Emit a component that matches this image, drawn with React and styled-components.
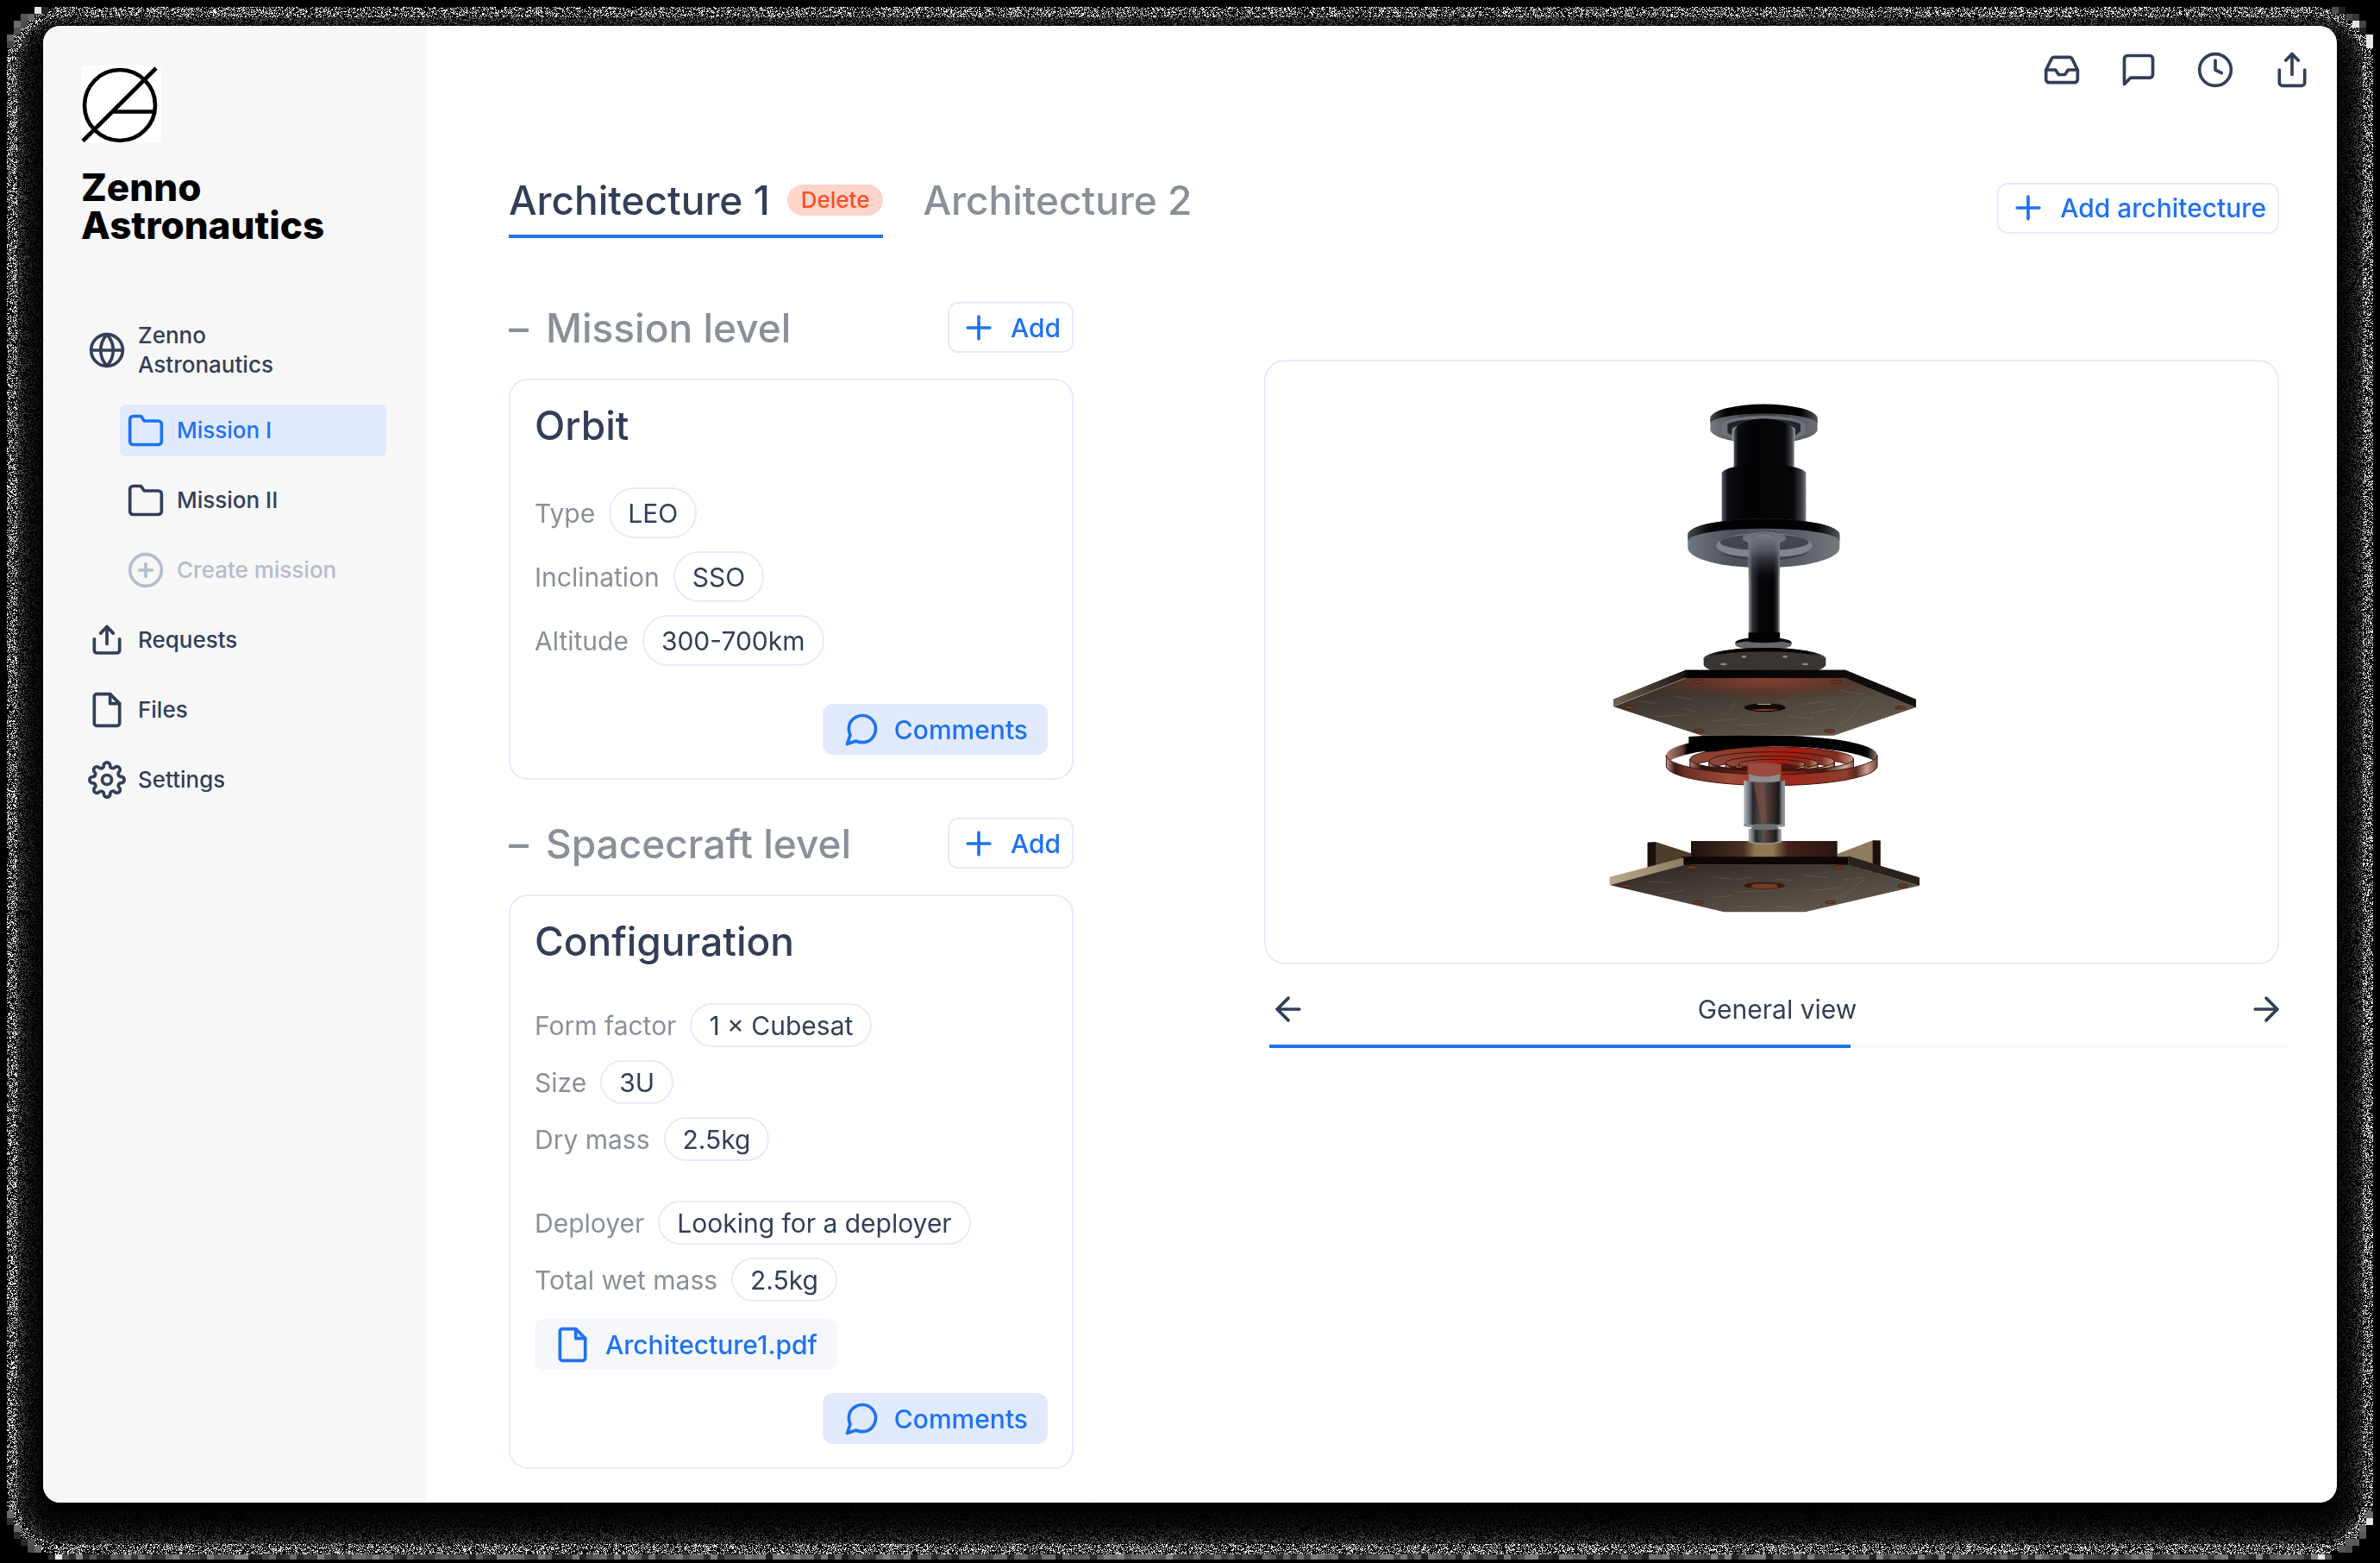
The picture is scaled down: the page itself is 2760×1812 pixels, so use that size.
import React, { useEffect, useRef } from "react";
import styled, { createGlobalStyle, css } from "styled-components";
import {
  FiArrowLeft,
  FiArrowRight,
  FiClock,
  FiFolder,
  FiGlobe,
  FiInbox,
  FiMessageCircle,
  FiMessageSquare,
  FiPlus,
  FiPlusCircle,
  FiSettings,
  FiShare,
} from "react-icons/fi";

const color = {
  ink: "#333e57",
  muted: "#8a8f99",
  faint: "#b5bccb",
  blue: "#1f72f2",
  blueSoft: "#e0eafc",
  line: "#e6eafb",
  sidebar: "#f7f7f7",
};

const GlobalStyle = createGlobalStyle`
  *, *::before, *::after { box-sizing: border-box; }
  body { margin: 0; background: #000; }
  body, button { font-family: Inter, "Noto Sans", sans-serif; color: ${color.ink}; }
  button { margin: 0; padding: 0; border: 0; background: none; cursor: pointer; }
  a { color: inherit; text-decoration: none; }
  h1, h2, h3, p, dl, dd, ul { margin: 0; padding: 0; }
  ul { list-style: none; }
  svg { display: block; flex: none; }
`;

/* ---------- frame ---------- */

const Stage = styled.div`
  position: relative;
  min-height: 100vh;
  padding: 30px 50px 70px;
`;

const Grain = styled.canvas`
  position: absolute;
  inset: 0;
  width: 100%;
  height: 100%;
`;

const Window = styled.div`
  position: relative;
  display: grid;
  grid-template-columns: 444px minmax(0, 1fr);
  min-height: calc(100vh - 100px);
  border-radius: 20px;
  overflow: hidden;
  background: #fff;
`;

/* ---------- sidebar ---------- */

const Sidebar = styled.aside`
  padding: 46px 46px 46px 44px;
  background: ${color.sidebar};
`;

const Brand = styled.h1`
  margin-top: 29px;
  font-size: 44px;
  line-height: 44px;
  font-weight: 800;
  color: #000;
`;

const Nav = styled.nav`
  margin-top: 81px;
`;

const NavList = styled.ul`
  display: flex;
  flex-direction: column;
  gap: 21px;
`;

const NavItem = styled.li`
  margin-left: ${(p) => (p.$nested ? "45px" : "0")};
`;

const NavLink = styled.a`
  display: flex;
  align-items: center;
  gap: 14px;
  padding: 8px;
  border-radius: 6px;
  font-size: 26px;
  line-height: 34px;
  font-weight: 500;
  color: ${(p) => (p.$tone === "active" ? color.blue : p.$tone === "faint" ? color.faint : color.ink)};
  background: ${(p) => (p.$tone === "active" ? color.blueSoft : "transparent")};
`;

const NavText = styled.span`
  max-width: 220px;
`;

/* ---------- main ---------- */

const Main = styled.main`
  display: flex;
  flex-direction: column;
`;

const Toolbar = styled.div`
  display: flex;
  justify-content: flex-end;
  gap: 45px;
  padding: 29px 30px 0;
`;

const Content = styled.div`
  padding: 103px 67px 38px 96px;
`;

const Header = styled.header`
  display: flex;
  align-items: center;
  justify-content: space-between;
`;

const Tabs = styled.div`
  display: flex;
  gap: 46px;
`;

const Tab = styled.div`
  display: flex;
  align-items: center;
  gap: 20px;
  padding-bottom: 14px;
  border-bottom: 4px solid ${(p) => (p.$active ? color.blue : "transparent")};
`;

const headingText = css`
  font-size: 46px;
  line-height: 52px;
  font-weight: 500;
`;

const TabButton = styled.button`
  ${headingText}
  color: ${(p) => (p.$active ? color.ink : color.muted)};
`;

const DeleteButton = styled.button`
  padding: 0 16px;
  border-radius: 18px;
  font-size: 26px;
  line-height: 36px;
  font-weight: 500;
  color: #fb4d22;
  background: #ffd4cb;
`;

const actionText = css`
  display: flex;
  align-items: center;
  height: 59px;
  font-size: 30px;
  line-height: 36px;
  font-weight: 500;
  color: ${color.blue};
`;

const OutlineButton = styled.button`
  ${actionText}
  gap: 15px;
  padding: 0 13px 0 12px;
  border: 2px solid ${color.line};
  border-radius: 12px;
`;

const CommentsButton = styled.button`
  ${actionText}
  align-self: flex-end;
  gap: 16px;
  padding: 0 23px;
  border-radius: 12px;
  background: ${color.blueSoft};
`;

const FileLink = styled.a`
  ${actionText}
  align-self: flex-start;
  gap: 16px;
  margin: 20px 0 27px;
  padding: 0 22px;
  border-radius: 10px;
  background: #f5f7fb;
`;

const Columns = styled.div`
  display: grid;
  grid-template-columns: minmax(0, 655fr) minmax(0, 1177fr);
  gap: 221px;
  align-items: start;
  margin-top: 74px;
`;

const Levels = styled.div`
  display: flex;
  flex-direction: column;
  gap: 44px;
`;

const LevelHead = styled.div`
  display: flex;
  align-items: center;
  justify-content: space-between;
  margin-bottom: 30px;
`;

const LevelTitle = styled.h2`
  ${headingText}
  display: flex;
  gap: 20px;
  color: ${color.muted};
`;

const Card = styled.section`
  display: flex;
  flex-direction: column;
  padding: 26px 28px 27px;
  border: 2px solid ${color.line};
  border-radius: 22px;
`;

const CardTitle = styled.h3`
  ${headingText}
  margin-bottom: 46px;
`;

const Fields = styled.dl`
  display: flex;
  flex-direction: column;
  gap: 15px;
  margin-bottom: ${(p) => (p.$last ? "0" : p.$compact ? "46px" : "44px")};
`;

const Field = styled.div`
  display: flex;
  align-items: center;
  gap: 16px;
  font-size: 30px;
  line-height: 36px;
`;

const Label = styled.dt`
  color: ${color.muted};
`;

const Pill = styled.dd`
  display: flex;
  align-items: center;
  height: ${(p) => (p.$compact ? "51px" : "59px")};
  padding: 0 20px;
  border: 2px solid ${color.line};
  border-radius: 30px;
`;

/* ---------- viewer ---------- */

const Viewer = styled.figure`
  margin: 67px 0 0;
`;

const Preview = styled.div`
  border: 2px solid ${color.line};
  border-radius: 24px;
  overflow: hidden;

  svg {
    width: 100%;
    height: auto;
  }
`;

const Caption = styled.figcaption`
  display: flex;
  align-items: center;
  justify-content: space-between;
  margin: 30px -7px 19px 6px;
  font-size: 30px;
  line-height: 36px;

  button {
    display: flex;
  }
`;

const Track = styled.div`
  height: 4px;
  margin: 0 -11px 0 6px;
  background: #f9f9fa;
`;

const Fill = styled.div`
  height: 100%;
  background: ${color.blue};
`;

/* ---------- drawings ---------- */

function GrainBackdrop() {
  const ref = useRef(null);
  useEffect(() => {
    const canvas = ref.current;
    const w = (canvas.width = canvas.clientWidth);
    const h = (canvas.height = canvas.clientHeight);
    const ctx = canvas.getContext("2d");
    const img = ctx.createImageData(w, h);
    let seed = 7;
    const rand = () => {
      seed = (seed + 0x6d2b79f5) | 0;
      let t = Math.imul(seed ^ (seed >>> 15), 1 | seed);
      t = (t + Math.imul(t ^ (t >>> 7), 61 | t)) ^ t;
      return ((t ^ (t >>> 14)) >>> 0) / 4294967296;
    };
    const radius = 64;
    const halfW = (w - 16) / 2;
    const halfH = (h - 18) / 2;
    const depth = (x, y) => {
      const qx = Math.abs(x - 8 - halfW) - halfW + radius;
      const qy = Math.abs(y - 8 - halfH) - halfH + radius;
      const out = Math.hypot(Math.max(qx, 0), Math.max(qy, 0)) + Math.min(Math.max(qx, qy), 0);
      return radius - out;
    };
    for (let y = 0; y < h; y += 1) {
      for (let x = 0; x < w; x += 1) {
        const d = depth(x + 0.5, y + 0.5);
        let v = 0;
        if (d > 0 && d < 80) {
          const r = rand();
          if (d < 12) v = r < 0.28 ? 255 : r < 0.45 ? 120 * rand() : 0;
          else v = r < 0.55 ? 240 * Math.exp(-(d - 6) / 14) * rand() : 0;
        }
        const i = (y * w + x) * 4;
        img.data[i] = img.data[i + 1] = img.data[i + 2] = v;
        img.data[i + 3] = 255;
      }
    }
    ctx.putImageData(img, 0, 0);
    for (let y = 0; y < h; y += 8) {
      for (let x = 0; x < w; x += 8) {
        const ds = [depth(x, y), depth(x + 8, y), depth(x, y + 8), depth(x + 8, y + 8)];
        if (Math.max(...ds) > 1 && Math.min(...ds) < -3) {
          const corner = (x < 72 || x > w - 80) && rand() < 0.3;
          const g = corner ? 230 : Math.round(30 + 100 * rand());
          ctx.fillStyle = `rgb(${g},${g},${g})`;
          const top = y > h - 16 ? y + 2 : y;
          ctx.fillRect(x, top, 8, y + 8 - top);
        }
      }
    }
  }, []);
  return <Grain ref={ref} aria-hidden="true" />;
}

const Logo = () => (
  <svg width="93" height="90" viewBox="0 0 93 90" fill="none" stroke="#000" strokeWidth="4.6">
    <rect width="93" height="90" rx="6" fill="#fff" stroke="none" />
    <ellipse cx="45" cy="46" rx="41" ry="41" />
    <path d="M2 87.500 87 3M35.500 53.500H85" />
  </svg>
);

const Stroke = ({ children }) => (
  <svg width="44" height="44" viewBox="0 0 24 24" fill="none" stroke="currentColor" strokeWidth="2" strokeLinecap="round" strokeLinejoin="round">
    {children}
  </svg>
);

const FileIcon = () => (
  <Stroke>
    <path d="M14 2H5.500A1.500 1.500 0 0 0 4 3.500v17A1.500 1.500 0 0 0 5.500 22h13a1.500 1.500 0 0 0 1.500-1.500V8z" />
    <path d="M14 2v6h6" />
  </Stroke>
);

const RequestIcon = () => (
  <Stroke>
    <path d="M4 11.300v7.200A1.700 1.700 0 0 0 5.700 20.200h12.600a1.700 1.700 0 0 0 1.700-1.700v-7.200" />
    <path d="M8 7.700l4-4.200 4 4.200M12 3.500v11" />
  </Stroke>
);

const halfRing = (cx, cy, rx, ry, h, back) => {
  const s = back ? 1 : 0;
  return `M${cx - rx} ${cy}A${rx} ${ry} 0 0 ${s} ${cx + rx} ${cy}v${h}A${rx} ${ry} 0 0 ${1 - s} ${cx - rx} ${cy + h}z`;
};

const coils = [
  { rx: 367, ry: 68, cy: 1366, h: 38 },
  { rx: 284, ry: 42, cy: 1380, h: 34 },
  { rx: 218, ry: 33, cy: 1388, h: 32 },
  { rx: 160, ry: 24, cy: 1394, h: 26 },
  { rx: 115, ry: 17, cy: 1398, h: 20 },
];

const bolts = [
  [268, 1200], [505, 1111], [988, 1111], [1210, 1201], [965, 1282], [510, 1282],
  [258, 1821], [488, 1757], [994, 1757], [1220, 1821], [968, 1878], [508, 1879],
];

const scratches =
  "M300 1178l60 8M360 1232l110-6M420 1160l70 14M560 1248l90-8M640 1180l-24 30M790 1178l30 6M870 1190l70-10 40 12M900 1220l90-16M985 1274l50-36 60-74M1000 1140l80 16M820 1232l90 6M650 1262l100-3M450 1205l50 10" +
  "M330 1806l90 4M370 1850l90-14M560 1790l70 8M640 1800l60-12M780 1798l60 4M870 1784l90 8M900 1838l110-12M985 1866l60-34 50-40M560 1862l70-8M650 1894l70-2M780 1892l60 6M640 1842l130-4M1010 1800l70-8";

const Model = () => (
  <svg viewBox="0 0 1173 697" role="img" aria-label="Exploded view of the spacecraft module">
    <defs>
      <linearGradient id="under" x1="0" x2="1">
        <stop offset="0" stopColor="#77797f" />
        <stop offset=".35" stopColor="#3d3f45" />
        <stop offset=".7" stopColor="#4d4f56" />
        <stop offset="1" stopColor="#6b6d73" />
      </linearGradient>
      <linearGradient id="flange" x1="0" x2="1">
        <stop offset="0" stopColor="#71757e" />
        <stop offset=".3" stopColor="#4b5059" />
        <stop offset=".7" stopColor="#585c65" />
        <stop offset="1" stopColor="#75777c" />
      </linearGradient>
      <linearGradient id="body" x1="0" x2="1">
        <stop offset="0" stopColor="#55585f" />
        <stop offset=".07" stopColor="#0b0d12" />
        <stop offset=".3" stopColor="#010204" />
        <stop offset=".85" stopColor="#060709" />
        <stop offset=".95" stopColor="#3b3d41" />
        <stop offset="1" stopColor="#7c7e82" />
      </linearGradient>
      <linearGradient id="rim" x1="0" x2="1">
        <stop offset="0" stopColor="#484b50" />
        <stop offset=".15" stopColor="#020203" />
        <stop offset=".85" stopColor="#020203" />
        <stop offset="1" stopColor="#54565a" />
      </linearGradient>
      <linearGradient id="rod" x1="0" x2="1">
        <stop offset="0" stopColor="#a3a5aa" />
        <stop offset=".12" stopColor="#2d3038" />
        <stop offset=".35" stopColor="#050609" />
        <stop offset=".8" stopColor="#020203" />
        <stop offset=".92" stopColor="#2e3036" />
        <stop offset="1" stopColor="#b0b2b6" />
      </linearGradient>
      <linearGradient id="rodTop" x1="0" x2="0" y1="0" y2="1">
        <stop offset="0" stopColor="#7c7f88" />
        <stop offset=".35" stopColor="#6a6e78" stopOpacity=".8" />
        <stop offset="1" stopColor="#20232a" stopOpacity="0" />
      </linearGradient>
      <linearGradient id="hexFace" x1="0" x2="1" y1="0" y2="1">
        <stop offset="0" stopColor="#2a2420" />
        <stop offset=".4" stopColor="#453e36" />
        <stop offset="1" stopColor="#6a6154" />
      </linearGradient>
      <linearGradient id="hexRim" x1="0" x2="1">
        <stop offset="0" stopColor="#6d6253" />
        <stop offset=".23" stopColor="#1d1814" />
        <stop offset=".25" stopColor="#000" />
        <stop offset="1" stopColor="#14110f" />
      </linearGradient>
      <radialGradient id="glow" cx=".5" cy=".05" r=".55">
        <stop offset="0" stopColor="#85402f" />
        <stop offset=".5" stopColor="#6b3426" stopOpacity=".75" />
        <stop offset="1" stopColor="#4a2d20" stopOpacity="0" />
      </radialGradient>
      <linearGradient id="outerBack" x1="0" x2="1">
        <stop offset="0" stopColor="#b38577" />
        <stop offset=".08" stopColor="#5a3a33" />
        <stop offset=".1" stopColor="#030202" />
        <stop offset=".95" stopColor="#030202" />
        <stop offset="1" stopColor="#94796f" />
      </linearGradient>
      <linearGradient id="outerFront" x1="0" x2="1">
        <stop offset="0" stopColor="#c99a8c" />
        <stop offset=".04" stopColor="#3a1d16" />
        <stop offset=".09" stopColor="#6b3022" />
        <stop offset=".3" stopColor="#a04a3a" />
        <stop offset=".6" stopColor="#9c281b" />
        <stop offset=".85" stopColor="#8e3e2f" />
        <stop offset=".9" stopColor="#5a2a20" />
        <stop offset=".95" stopColor="#cfa194" />
        <stop offset="1" stopColor="#6b4a40" />
      </linearGradient>
      <linearGradient id="innerFront" x1="0" x2="1">
        <stop offset="0" stopColor="#b78476" />
        <stop offset=".07" stopColor="#2a1410" />
        <stop offset=".2" stopColor="#4a1c14" />
        <stop offset=".55" stopColor="#a02418" />
        <stop offset=".82" stopColor="#3c1812" />
        <stop offset=".95" stopColor="#d3aca0" />
        <stop offset="1" stopColor="#8d594b" />
      </linearGradient>
      <linearGradient id="innerBack" x1="0" x2="1">
        <stop offset="0" stopColor="#8a4a3c" />
        <stop offset=".35" stopColor="#8f3323" />
        <stop offset=".62" stopColor="#ac1a0e" />
        <stop offset=".9" stopColor="#7d3023" />
        <stop offset="1" stopColor="#c79486" />
      </linearGradient>
      <linearGradient id="shaft" x1="0" x2="1">
        <stop offset="0" stopColor="#b7bac0" />
        <stop offset=".14" stopColor="#6b6e75" />
        <stop offset=".22" stopColor="#24262b" />
        <stop offset=".45" stopColor="#5d514f" />
        <stop offset=".62" stopColor="#453632" />
        <stop offset=".85" stopColor="#1a191b" />
        <stop offset=".92" stopColor="#77797e" />
        <stop offset="1" stopColor="#9b9da2" />
      </linearGradient>
      <linearGradient id="block" x1="0" x2="1">
        <stop offset="0" stopColor="#1f120d" />
        <stop offset=".36" stopColor="#4a2f22" />
        <stop offset=".44" stopColor="#8f7752" />
        <stop offset=".56" stopColor="#8f7752" />
        <stop offset=".66" stopColor="#42211a" />
        <stop offset="1" stopColor="#2a1511" />
      </linearGradient>
      <linearGradient id="tan" x1="0" x2="1">
        <stop offset="0" stopColor="#b9a88c" />
        <stop offset="1" stopColor="#8c7c62" />
      </linearGradient>
    </defs>

    <g transform="translate(332 1) scale(.33333)">
      {/* cap */}
      <path d="M550 198A187 54 0 0 1 923 198v38A187 50 0 0 1 550 236z" fill="url(#under)" />
      <path d="M550 192A187 50 0 0 1 923 192v20A187 36 0 0 0 550 212z" fill="url(#rim)" />
      <path d="M589 216A148 36 0 0 1 881 216v30A148 38 0 0 1 589 246z" fill="#6f7279" />
      <path d="M610 214A148 36 0 0 1 864 214v24A130 38 0 0 1 610 244z" fill="#22242a" />
      <path d="M626 232A112 26 0 0 1 846 232v36l-14 14H640l-16-14z" fill="#8b8f97" />
      <path d="M632 240A106 50 0 0 1 842 240V374H632z" fill="url(#body)" />
      <path d="M590 385A147 34 0 0 1 883 385V570H590z" fill="url(#body)" />
      {/* flange */}
      <path d="M472 600A264 56 0 0 1 1000 600v45A264 70 0 0 1 472 645z" fill="url(#flange)" />
      <path d="M472 598A264 54 0 0 1 1000 598v24A264 44 0 0 0 472 622z" fill="url(#rim)" />
      <ellipse cx="738" cy="638" rx="167" ry="44" fill="#7f848f" />
      <ellipse cx="738" cy="626" rx="154" ry="28" fill="#41454e" />
      <path d="M582 660A167 44 0 0 0 895 660A172 32 0 0 1 582 660z" fill="#3c4049" />
      <ellipse cx="738" cy="612" rx="76" ry="22" fill="#6e727c" />
      {/* rod */}
      <path d="M683 620Q738 570 792 620V975H683z" fill="url(#rod)" />
      <path d="M683 620Q738 570 792 620V760H683z" fill="url(#rodTop)" />
      <ellipse cx="735" cy="982" rx="98" ry="18" fill="#66686c" />
      <path d="M637 975A98 19 0 0 1 833 975v6A98 13 0 0 0 637 981z" fill="#08080a" />
      <path d="M683 940H792V972A60 6 0 0 1 683 972z" fill="#020203" />
      {/* disc */}
      <path d="M527 1030A213 40 0 0 1 952 1030v22A213 46 0 0 1 527 1052z" fill="#3b3532" />
      <path d="M527 1030A213 40 0 0 1 952 1030v4A213 30 0 0 0 527 1034z" fill="url(#rim)" />
      <g fill="#8d8986">
        <ellipse cx="596" cy="1050" rx="11" ry="4" />
        <ellipse cx="667" cy="1024" rx="9" ry="4" />
        <ellipse cx="810" cy="1024" rx="9" ry="4" />
        <ellipse cx="880" cy="1050" rx="11" ry="4" />
      </g>

      {/* spiral coil */}
      {coils.map((c, i) => (
        <path key={`b${i}`} d={halfRing(764, c.cy, c.rx, c.ry, c.h, true)} fill={i === 0 ? "url(#outerBack)" : "url(#innerBack)"} stroke={i ? "#3c120b" : "none"} strokeWidth="3" />
      ))}
      <path d="M475 1302Q600 1292 760 1298V1336Q650 1338 568 1354H475z" fill="#020101" />
      <ellipse cx="764" cy="1412" rx="104" ry="18" fill="#5a150d" />
      {coils.slice().reverse().map((c, i) => (
        <path key={`f${i}`} d={halfRing(764, c.cy, c.rx, c.ry, c.h, false)} fill={i === coils.length - 1 ? "url(#outerFront)" : "url(#innerFront)"} stroke="#3c120b" strokeWidth="3" />
      ))}

      {/* upper plate */}
      <path d="M465 1070H1020L1266 1172V1200L980 1298H520L213 1198V1172z" fill="url(#hexFace)" />
      <path d="M465 1098H1020L1200 1172 1080 1230H400L290 1172z" fill="url(#glow)" />
      <path d="M465 1070H1020L1266 1172V1200L1020 1098H465L213 1198V1174z" fill="url(#hexRim)" />
      <path d="M213 1197L465 1098" stroke="#9a8b76" strokeWidth="3" />
      <ellipse cx="740" cy="1201" rx="72" ry="15" fill="#120806" />
      <path d="M690 1208A72 14 0 0 0 790 1208A90 10 0 0 0 690 1208z" fill="#8e3d26" />
      <path d="M715 1189h46" stroke="#d8c9a8" strokeWidth="3" />

      {/* shaft */}
      <path d="M680 1398Q738 1388 797 1398V1440Q738 1462 680 1440z" fill="#9a4a3e" />
      <path d="M684 1432Q738 1450 793 1432V1460H684z" fill="#8a8d93" />
      <path d="M667 1454Q738 1470 810 1454V1608Q738 1632 667 1608z" fill="url(#shaft)" />
      <path d="M700 1462L735 1462 748 1600 728 1600z" fill="#7a4a42" opacity=".7" />
      <path d="M667 1604Q738 1618 810 1604V1614Q738 1628 667 1614z" fill="#8d9096" />
      <path d="M704 1606H776L796 1632H684z" fill="#6b6e74" />

      {/* lower plate */}
      <path d="M332 1670L360 1668 483 1708V1760H332z" fill="#4d3d2c" />
      <path d="M332 1670H360V1755H332z" fill="#17100b" />
      <path d="M992 1710L1115 1663 1142 1665V1765H992z" fill="#8d7c60" />
      <path d="M1115 1663H1142V1775H1115z" fill="#1a100c" />
      <path d="M483 1665H992V1725H483z" fill="url(#block)" />
      <path d="M200 1818L455 1748H1030L1278 1820 880 1912H598z" fill="url(#hexFace)" />
      <path d="M450 1720H1030V1748H450z" fill="#0d0806" />
      <path d="M1030 1717L1278 1792V1820L1030 1748z" fill="#2a231c" />
      <path d="M200 1790L457 1723V1750L200 1818z" fill="url(#tan)" />
      <path d="M683 1622Q738 1632 797 1622V1668Q738 1684 683 1668z" fill="url(#shaft)" />
      <path d="M683 1664Q738 1680 797 1664V1670Q738 1686 683 1670z" fill="#8f8b86" />
      <ellipse cx="738" cy="1820" rx="72" ry="12" fill="#3a1a11" />
      <path d="M690 1827A70 9 0 0 0 786 1827L778 1814H700z" fill="#7a3c28" />
      <path d={scratches} fill="none" stroke="#9c907e" strokeOpacity=".4" strokeWidth="2" />
      {bolts.map(([x, y]) => (
        <ellipse key={`${x}-${y}`} cx={x} cy={y} rx="18" ry="5" fill="#7d3825" stroke="#3c2118" strokeWidth="3" />
      ))}
    </g>
  </svg>
);

/* ---------- page ---------- */

const navItems = [
  { label: ["Zenno", "Astronautics"], icon: FiGlobe },
  { label: ["Mission I"], icon: FiFolder, nested: true, tone: "active" },
  { label: ["Mission II"], icon: FiFolder, nested: true },
  { label: ["Create mission"], icon: FiPlusCircle, nested: true, tone: "faint" },
  { label: ["Requests"], icon: RequestIcon },
  { label: ["Files"], icon: FileIcon },
  { label: ["Settings"], icon: FiSettings },
];

const tools = [
  ["Inbox", FiInbox],
  ["Messages", FiMessageSquare],
  ["History", FiClock],
  ["Share", FiShare],
];

const FieldList = ({ items, compact, last }) => (
  <Fields $compact={compact} $last={last}>
    {items.map(([label, value]) => (
      <Field key={label}>
        <Label>{label}</Label>
        <Pill $compact={compact}>{value}</Pill>
      </Field>
    ))}
  </Fields>
);

const Level = ({ title, children }) => (
  <div>
    <LevelHead>
      <LevelTitle>
        <span>–</span>
        {title}
      </LevelTitle>
      <OutlineButton type="button">
        <FiPlus size={44} />
        Add
      </OutlineButton>
    </LevelHead>
    {children}
  </div>
);

const Comments = () => (
  <CommentsButton type="button">
    <FiMessageCircle size={44} />
    Comments
  </CommentsButton>
);

export default function App() {
  const progress = 57;
  return (
    <>
      <GlobalStyle />
      <Stage>
        <GrainBackdrop />
        <Window>
          <Sidebar>
            <Logo />
            <Brand>
              Zenno
              <br />
              Astronautics
            </Brand>
            <Nav>
              <NavList>
                {navItems.map(({ label, icon: Icon, nested, tone }) => (
                  <NavItem key={label[0]} $nested={nested}>
                    <NavLink href="#" $tone={tone}>
                      <Icon size={44} />
                      <NavText>
                        {label[0]}
                        {label[1] && <br />}
                        {label[1]}
                      </NavText>
                    </NavLink>
                  </NavItem>
                ))}
              </NavList>
            </Nav>
          </Sidebar>

          <Main>
            <Toolbar>
              {tools.map(([name, Icon]) => (
                <button key={name} type="button" aria-label={name}>
                  <Icon size={44} />
                </button>
              ))}
            </Toolbar>
            <Content>
              <Header>
                <Tabs>
                  <Tab $active>
                    <TabButton type="button" $active>Architecture 1</TabButton>
                    <DeleteButton type="button">Delete</DeleteButton>
                  </Tab>
                  <Tab>
                    <TabButton type="button">Architecture 2</TabButton>
                  </Tab>
                </Tabs>
                <OutlineButton type="button">
                  <FiPlus size={44} />
                  Add architecture
                </OutlineButton>
              </Header>

              <Columns>
                <Levels>
                  <Level title="Mission level">
                    <Card>
                      <CardTitle>Orbit</CardTitle>
                      <FieldList
                        items={[
                          ["Type", "LEO"],
                          ["Inclination", "SSO"],
                          ["Altitude", "300-700km"],
                        ]}
                      />
                      <Comments />
                    </Card>
                  </Level>
                  <Level title="Spacecraft level">
                    <Card>
                      <CardTitle>Configuration</CardTitle>
                      <FieldList
                        compact
                        items={[
                          ["Form factor", "1 × Cubesat"],
                          ["Size", "3U"],
                          ["Dry mass", "2.5kg"],
                        ]}
                      />
                      <FieldList
                        compact
                        last
                        items={[
                          ["Deployer", "Looking for a deployer"],
                          ["Total wet mass", "2.5kg"],
                        ]}
                      />
                      <FileLink href="#">
                        <FileIcon />
                        Architecture1.pdf
                      </FileLink>
                      <Comments />
                    </Card>
                  </Level>
                </Levels>

                <Viewer>
                  <Preview>
                    <Model />
                  </Preview>
                  <Caption>
                    <button type="button" aria-label="Previous view">
                      <FiArrowLeft size={44} />
                    </button>
                    General view
                    <button type="button" aria-label="Next view">
                      <FiArrowRight size={44} />
                    </button>
                  </Caption>
                  <Track role="progressbar" aria-label="View progress" aria-valuenow={progress} aria-valuemin={0} aria-valuemax={100}>
                    <Fill style={{ width: `${progress}%` }} />
                  </Track>
                </Viewer>
              </Columns>
            </Content>
          </Main>
        </Window>
      </Stage>
    </>
  );
}
